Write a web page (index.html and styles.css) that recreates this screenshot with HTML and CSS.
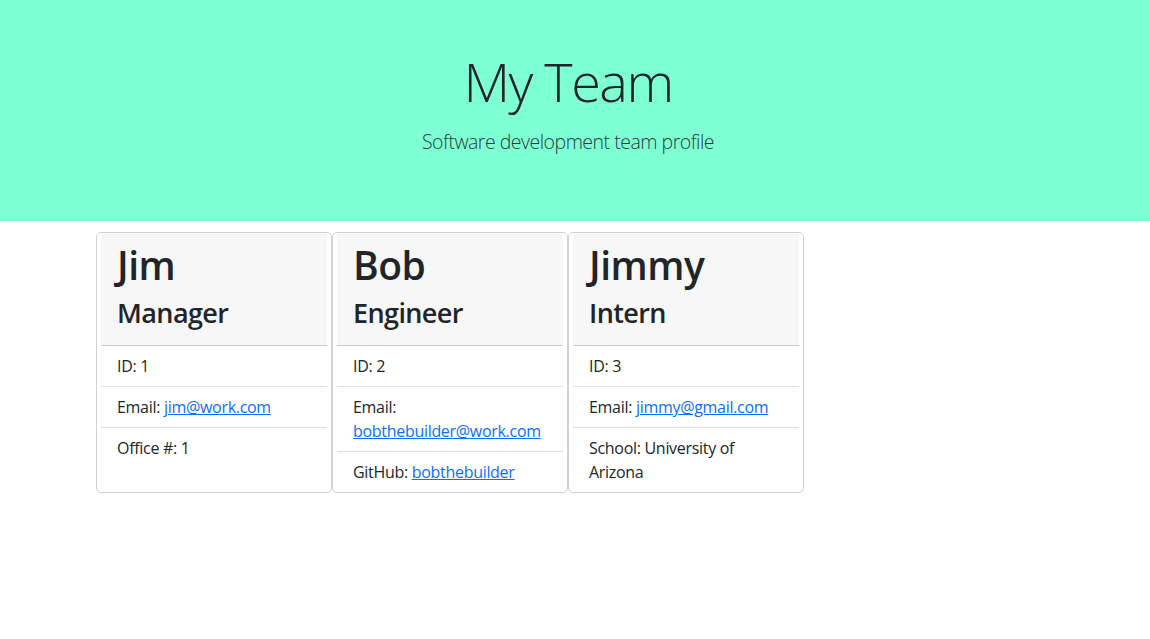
FILE: index.html
```html
<!DOCTYPE html>
<html lang="en">
<head>
<meta charset="UTF-8">
<title>My Team</title>
<link rel="stylesheet" href="styles.css">
</head>
<body>
<header class="jumbotron">
  <h1 class="display">My Team</h1>
  <p class="lead">Software development team profile</p>
</header>
<main class="team">
  <div class="card">
    <div class="card-header">
      <h2 class="name">Jim</h2>
      <h3 class="role">Manager</h3>
    </div>
    <ul class="list">
      <li class="item">ID: 1</li>
      <li class="item">Email: <a href="mailto:jim@work.com">jim@work.com</a></li>
      <li class="item">Office #: 1</li>
    </ul>
  </div>
  <div class="card">
    <div class="card-header">
      <h2 class="name">Bob</h2>
      <h3 class="role">Engineer</h3>
    </div>
    <ul class="list">
      <li class="item">ID: 2</li>
      <li class="item">Email: <a href="mailto:bobthebuilder@work.com">bobthebuilder@work.com</a></li>
      <li class="item">GitHub: <a href="#">bobthebuilder</a></li>
    </ul>
  </div>
  <div class="card">
    <div class="card-header">
      <h2 class="name">Jimmy</h2>
      <h3 class="role">Intern</h3>
    </div>
    <ul class="list">
      <li class="item">ID: 3</li>
      <li class="item">Email: <a href="mailto:jimmy@gmail.com">jimmy@gmail.com</a></li>
      <li class="item">School: University of Arizona</li>
    </ul>
  </div>
</main>
</body>
</html>
```

FILE: styles.css
```css
* { box-sizing: border-box; }
html, body { margin: 0; padding: 0; }
body {
  font-family: "Open Sans", "Noto Sans", sans-serif;
  font-size: 16px;
  line-height: 1.5;
  color: #212529;
  background: #fff;
}
.jumbotron {
  background: #7fffd4;
  height: 221px;
  padding: 49px 14px 0 0;
  text-align: center;
}
.display {
  margin: 0 0 13px;
  font-size: 54px;
  font-weight: 300;
  line-height: 1.2;
  letter-spacing: -1.5px;
}
.lead {
  margin: 0;
  font-size: 19.5px;
  font-weight: 300;
  letter-spacing: -0.5px;
  color: #2b3a3a;
}
.team {
  width: 960px;
  margin: 11px auto 0;
  padding-left: 1px;
  display: flex;
}
.card {
  width: 236px;
  border: 1px solid rgba(0,0,0,.18);
  border-radius: 5px;
  padding: 0 4px;
  display: flex;
  flex-direction: column;
}
.card-header {
  background: #f7f7f7;
  padding: 8px 16px;
  border-bottom: 1px solid rgba(0,0,0,.18);
}
.name {
  margin: 0 0 8px;
  font-size: 39px;
  font-weight: 600;
  line-height: 48px;
  letter-spacing: -0.5px;
}
.role {
  margin: 0 0 8px;
  font-size: 27px;
  font-weight: 600;
  line-height: 32px;
  letter-spacing: -0.6px;
}
.list {
  list-style: none;
  margin: 0;
  padding: 0;
}
.item {
  padding: 8px 16px;
  border-bottom: 1px solid rgba(0,0,0,.125);
  letter-spacing: -0.3px;
}
.item:last-child { border-bottom: 0; }
a { color: #0d6efd; text-decoration: underline; }
```
